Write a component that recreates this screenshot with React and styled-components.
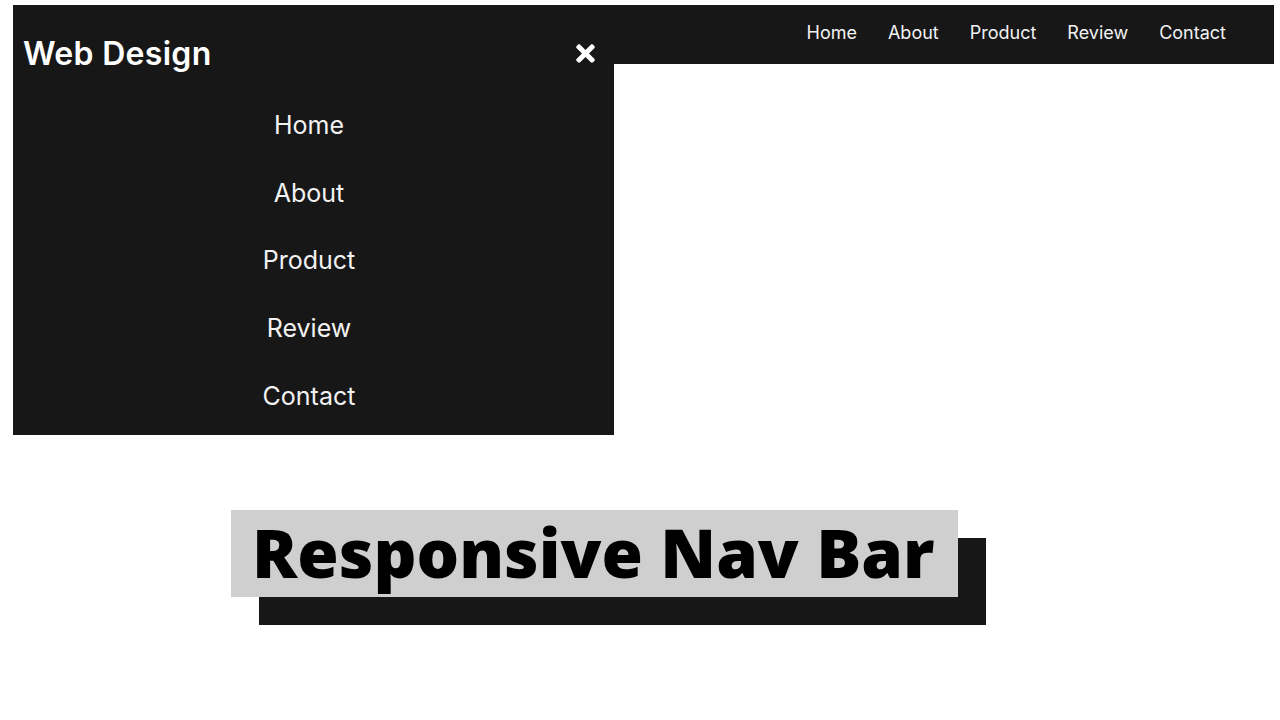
import styled, { createGlobalStyle } from "styled-components";
import { FaTimes } from "react-icons/fa";

const GlobalStyle = createGlobalStyle`
  body {
    margin: 0;
    background: #ffffff;
    font-family: "Inter", "Noto Sans", sans-serif;
  }
`;

const links = ["Home", "About", "Product", "Review", "Contact"];

const Page = styled.div`
  width: 1280px;
  height: 720px;
  padding: 5px 6px 0 13px;
  box-sizing: border-box;
  overflow: hidden;
`;

const Header = styled.div`
  display: flex;
  align-items: flex-start;
`;

const MobilePanel = styled.div`
  width: 601px;
  height: 430px;
  background: #171717;
  display: flex;
  flex-direction: column;
`;

const PanelTop = styled.div`
  display: flex;
  align-items: center;
  justify-content: space-between;
  height: 96px;
  padding: 0 15px 0 10px;
  box-sizing: border-box;
`;

const Brand = styled.h1`
  margin: 0;
  color: #ffffff;
  font-size: 32px;
  font-weight: 600;
  letter-spacing: 0.3px;
`;

const CloseButton = styled.button`
  background: none;
  border: 0;
  padding: 0;
  color: #ffffff;
  display: flex;
  font-size: 27px;
`;

const MobileList = styled.ul`
  list-style: none;
  margin: 0;
  padding: 0 9px 0 0;
  display: flex;
  flex-direction: column;
  align-items: center;
`;

const MobileItem = styled.li`
  color: #f2f2f2;
  font-size: 25px;
  font-weight: 400;
  height: 67.7px;
  line-height: 67.7px;
  margin-top: ${(p) => (p.$first ? "-9px" : "0")};
`;

const TopBar = styled.nav`
  flex: 1;
  height: 59px;
  background: #171717;
  display: flex;
  align-items: center;
  justify-content: flex-end;
  padding-right: 48px;
  padding-bottom: 4px;
  box-sizing: border-box;
`;

const TopLinks = styled.ul`
  list-style: none;
  margin: 0;
  padding: 0;
  display: flex;
  gap: 31px;
`;

const TopItem = styled.li`
  color: #f2f2f2;
  font-size: 18px;
  font-weight: 400;
`;

const TitleWrap = styled.div`
  margin: 75px 0 0 218px;
`;

const Title = styled.h2`
  display: inline-block;
  margin: 0;
  width: 727px;
  height: 87px;
  box-sizing: border-box;
  padding-left: 21px;
  background: #cfcfcf;
  box-shadow: 28px 28px 0 #171717;
  font-family: "Open Sans", sans-serif;
  font-weight: 800;
  font-size: 67px;
  line-height: 85px;
  color: #000000;
  white-space: nowrap;
`;

export default function App() {
  return (
    <>
      <GlobalStyle />
      <Page>
        <Header>
          <MobilePanel>
            <PanelTop>
              <Brand>Web Design</Brand>
              <CloseButton>
                <FaTimes />
              </CloseButton>
            </PanelTop>
            <MobileList>
              {links.map((l, i) => (
                <MobileItem key={l} $first={i === 0}>
                  {l}
                </MobileItem>
              ))}
            </MobileList>
          </MobilePanel>
          <TopBar>
            <TopLinks>
              {links.map((l) => (
                <TopItem key={l}>{l}</TopItem>
              ))}
            </TopLinks>
          </TopBar>
        </Header>
        <TitleWrap>
          <Title>Responsive Nav Bar</Title>
        </TitleWrap>
      </Page>
    </>
  );
}
